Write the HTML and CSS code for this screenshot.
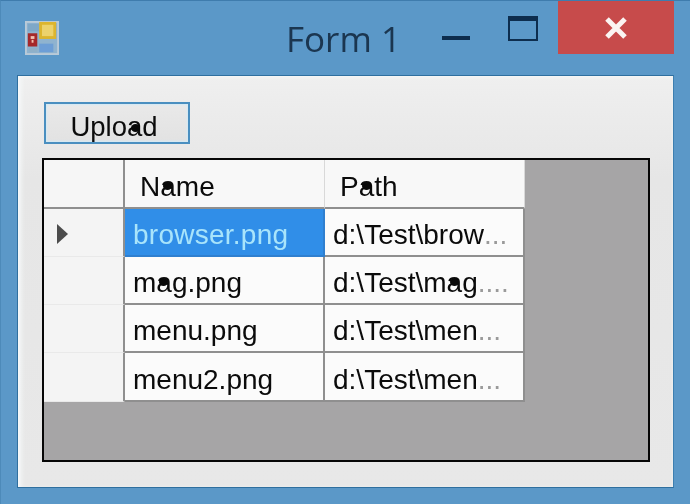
FILE: index.html
```html
<!DOCTYPE html>
<html lang="en">
<head>
<meta charset="utf-8">
<title>Form 1</title>
<link rel="stylesheet" href="styles.css">
</head>
<body>
<div class="window">
  <header class="titlebar">
    <svg class="app-icon" width="34" height="34" viewBox="0 0 36 36" aria-hidden="true">
      <rect x="1" y="1" width="34" height="34" fill="#8fb3cf" stroke="#b9cad8" stroke-width="2"/>
      <rect x="3" y="3" width="12" height="8" fill="#7ea8c8"/>
      <rect x="3" y="13" width="10" height="14" fill="#a5282a"/>
      <rect x="6" y="16" width="4" height="3" fill="#f0c0b0"/>
      <rect x="7" y="20" width="2" height="3" fill="#f0c0b0"/>
      <rect x="15" y="1" width="18" height="18" fill="#dcb52e"/>
      <rect x="18" y="4" width="12" height="12" fill="#ecd26c"/>
      <rect x="15" y="24" width="15" height="9" fill="#6d9ed6"/>
      <rect x="4" y="29" width="9" height="4" fill="#8fb0c8"/>
    </svg>
    <h1 class="title">Form 1</h1>
    <span class="btn-min"></span>
    <span class="btn-max"></span>
    <span class="btn-close">
      <svg width="24" height="22" viewBox="0 0 24 22" aria-hidden="true"><path d="M3 2 L21 20 M21 2 L3 20" stroke="#fbf4f2" stroke-width="5"/></svg>
    </span>
  </header>
  <main class="client">
    <button class="upload" type="button">Uplo<span class="blob blob-up">a</span>d</button>
    <div class="grid-view">
      <div class="grid">
        <div class="corner"></div>
        <div class="head">N<span class="blob">a</span>me</div>
        <div class="head">P<span class="blob">a</span>th</div>

        <div class="rowhead"><span class="arrow"></span></div>
        <div class="cell selected">browser.png</div>
        <div class="cell">d:\Test\brow<span class="dots">...</span></div>

        <div class="rowhead"></div>
        <div class="cell">m<span class="blob">a</span>g.png</div>
        <div class="cell">d:\Test\m<span class="blob">a</span>g<span class="dots">....</span></div>

        <div class="rowhead"></div>
        <div class="cell">menu.png</div>
        <div class="cell">d:\Test\men<span class="dots">...</span></div>

        <div class="rowhead"></div>
        <div class="cell">menu2.png</div>
        <div class="cell">d:\Test\men<span class="dots">...</span></div>
      </div>
    </div>
  </main>
</div>
</body>
</html>
```
FILE: styles.css
```css
* { box-sizing: border-box; }
html, body { margin: 0; padding: 0; }
body { width: 690px; height: 504px; overflow: hidden; background: #5b98c8; }

.window {
  width: 690px;
  height: 504px;
  display: flex;
  flex-direction: column;
  background: #5b98c8;
  border-top: 1px solid #3f7cad;
  border-left: 1px solid #4d8ab9;
  filter: blur(0.45px);
}

.titlebar {
  height: 74px;
  display: flex;
  align-items: flex-start;
  padding-left: 24px;
}
.app-icon { margin-top: 20px; flex: none; }
.title {
  margin: 13px 0 0 227px;
  font: 400 35px/50px "Open Sans", sans-serif;
  color: #1b3650;
  white-space: nowrap;
  width: 156px;
  flex: none;
}
.btn-min {
  width: 28px;
  height: 4px;
  margin-top: 35px;
  background: #0d2d4e;
  flex: none;
}
.btn-max {
  width: 30px;
  height: 25px;
  margin: 15px 0 0 38px;
  border: 2px solid #0d2d4e;
  border-top-width: 5px;
  flex: none;
}
.btn-close {
  width: 116px;
  height: 53px;
  margin: 0 0 0 20px;
  background: #c74b4b;
  display: flex;
  align-items: center;
  justify-content: center;
  flex: none;
}

.client {
  width: 657px;
  height: 413px;
  margin-left: 16px;
  padding: 26px 23px 0 26px;
  background: linear-gradient(#efefef, #e6e6e6 25%, #e8e8e8 100%);
  border: 1px solid #2f6f9f;
  border-right-color: #3d7fb0;
  box-shadow: inset 5px 0 4px -2px #f6f9fa, inset 0 2px 3px #f5f5f5;
  display: flex;
  flex-direction: column;
  align-items: flex-start;
}

.upload {
  width: 146px;
  height: 42px;
  padding: 7px 6px 0 0;
  background: linear-gradient(#e9e9e9, #e2e2e2);
  border: 2px solid #4a8fc0;
  box-shadow: inset 0 0 2px 1px #d3eaf6;
  font: 400 27.5px/32px "Liberation Sans", Arial, sans-serif;
  color: #0c0c0c;
}

.grid-view {
  width: 608px;
  height: 304px;
  margin: 14px 0 0 -2px;
  background: #a6a5a6;
  border: 2px solid #060606;
  display: flex;
  align-items: flex-start;
}

.grid {
  display: grid;
  grid-template-columns: 81px 200px 200px;
  grid-template-rows: 49px 48px 48px 48px 49px;
  font: 400 28px/1 "Liberation Sans", Arial, sans-serif;
  color: #0b0b0b;
}

.corner {
  background: #f6f6f6;
  border-bottom: 2px solid #8f8f8f;
  border-right: 2px solid #8f8f8f;
}
.head {
  background: #f8f8f8;
  border-bottom: 2px solid #8f8f8f;
  border-right: 1px solid #d9d9d9;
  padding: 6px 0 0 15px;
  display: flex;
  align-items: center;
  white-space: pre;
}
.rowhead {
  background: #f4f4f4;
  border-right: 2px solid #8f8f8f;
  border-bottom: 1px solid #e9e9e9;
  display: flex;
  align-items: center;
  padding: 2px 0 0 13px;
}
.arrow {
  width: 0;
  height: 0;
  border-left: 11px solid #4c4c4c;
  border-top: 10px solid transparent;
  border-bottom: 10px solid transparent;
}
.cell {
  background: #fbfbfb;
  border-right: 2px solid #8f8f8f;
  border-bottom: 2px solid #8f8f8f;
  padding: 6px 0 0 8px;
  display: flex;
  align-items: center;
  white-space: pre;
}
.selected {
  background: #308ee8;
  color: #a8e4fb;
  letter-spacing: 0.25px;
  border-bottom-color: #2f7fcf;
  border-right-color: #2f7fcf;
}
.dots { color: #9a9a9a; }

.blob { position: relative; }
.blob::after {
  content: "";
  position: absolute;
  width: 9px;
  height: 8px;
  left: 3px;
  top: 9px;
  border-radius: 50%;
  background: #080808;
}
.blob-up::after { left: 4px; top: 13px; }
```
